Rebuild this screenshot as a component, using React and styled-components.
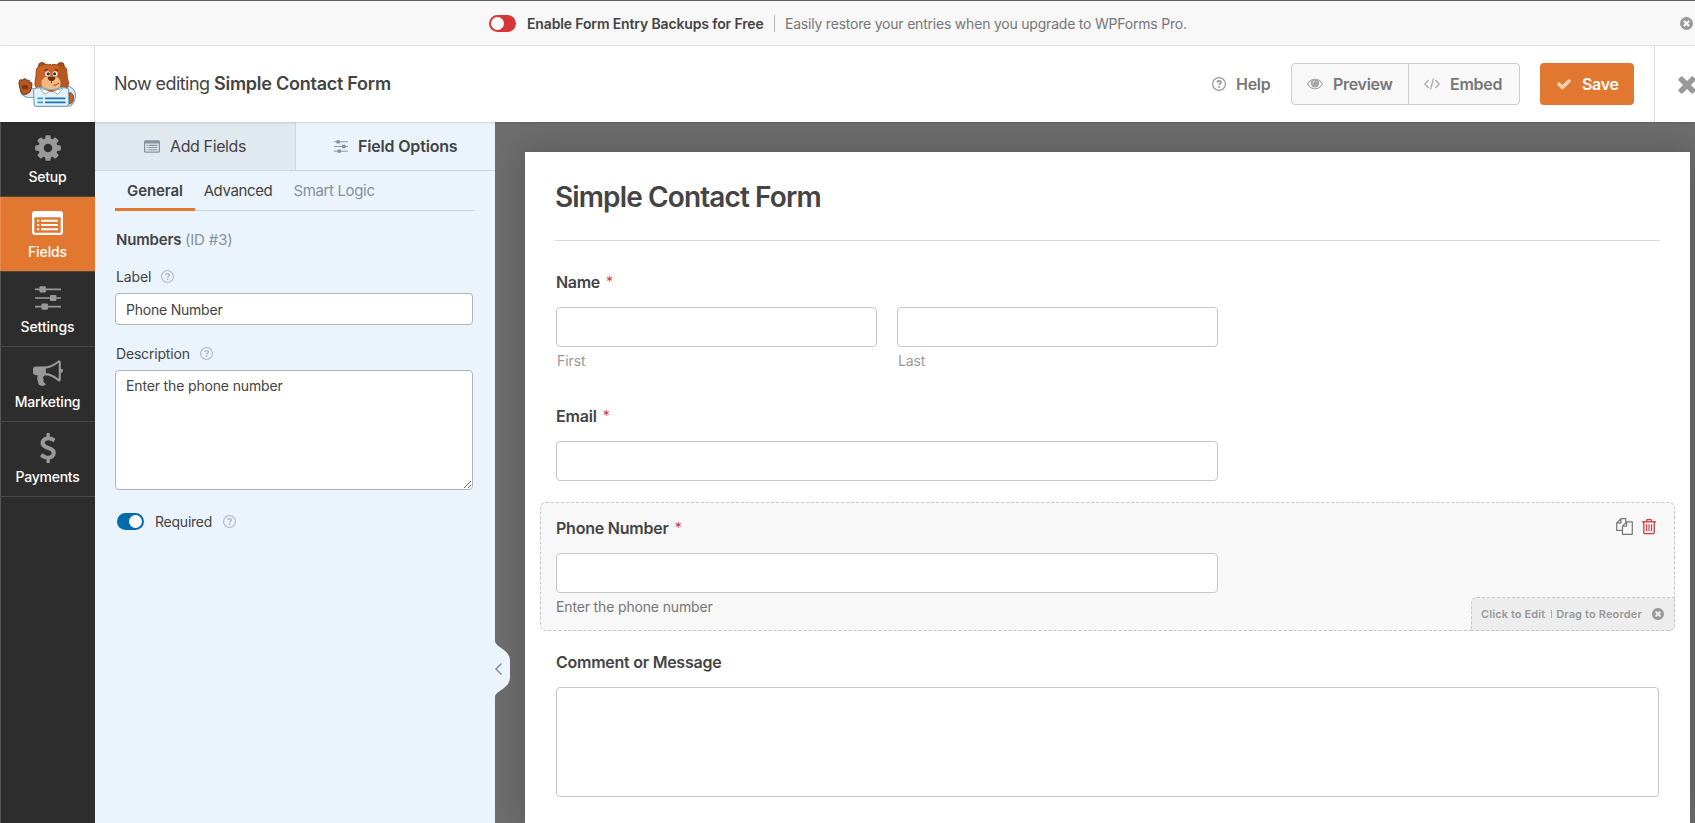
import React from 'react';
import styled, { createGlobalStyle, css } from 'styled-components';

const GlobalStyle = createGlobalStyle`
  *, *::before, *::after { box-sizing: border-box; }
  html, body { margin: 0; padding: 0; height: 100%; overflow: hidden; }
  body {
    font-family: Inter, "Liberation Sans", sans-serif;
    font-size: 14px;
    color: #444;
    -webkit-font-smoothing: antialiased;
  }
`;

const Page = styled.div`
  display: flex;
  flex-direction: column;
  width: 1695px;
  height: 823px;
  overflow: hidden;
  border-top: 1px solid #5f5d64;
  background: #fff;
`;

const Label = styled.span`
  white-space: nowrap;
  letter-spacing: ${(p) => p.$ls || 0}px;
`;

/* ---------- Notice bar ---------- */
const Notice = styled.div`
  flex: none;
  display: flex;
  align-items: center;
  height: 45px;
  padding: 0 1px 0 489px;
  background: #f8f8f8;
  border-bottom: 1px solid #e6e6e6;
  color: #777;
  line-height: 17px;
`;
const NoticeTitle = styled(Label)`
  margin-left: 11px;
  width: 248px;
  border-right: 1px solid #b4b4b4;
  font-weight: 600;
  color: #444;
`;
const NoticeText = styled(Label)`
  margin-left: 10px;
  flex: 1;
`;
const Switch = styled.span`
  flex: none;
  display: flex;
  justify-content: ${(p) => (p.$on ? 'flex-end' : 'flex-start')};
  width: 27px;
  height: 17px;
  padding: 2px;
  border-radius: 9px;
  background: ${(p) => (p.$on ? '#036aab' : '#d63638')};
  &::after {
    content: '';
    width: 13px;
    height: 13px;
    border-radius: 50%;
    background: #fff;
  }
`;

/* ---------- Header ---------- */
const Header = styled.header`
  flex: none;
  position: relative;
  z-index: 2;
  display: flex;
  height: 76px;
  background: #fff;
  box-shadow: 0 1px 2px rgba(0, 0, 0, 0.12);
`;
const Logo = styled.div`
  flex: none;
  width: 95px;
  padding: 15px 0 0 18px;
  border-right: 1px solid #dcdcdc;
`;
const Editing = styled.div`
  flex: 1;
  padding: 27px 0 0 19px;
  font-size: 18px;
  line-height: 22px;
  white-space: nowrap;
  b { font-weight: 600; letter-spacing: -0.25px; }
`;
const Actions = styled.div`
  display: flex;
  align-items: center;
  height: 76px;
  font-size: 16px;
  font-weight: 600;
  color: #777;
`;
const HelpLink = styled.div`
  display: flex;
  align-items: center;
  width: 79px;
  gap: 10px;
`;
const ButtonGroup = styled.div`
  display: flex;
  width: 229px;
  height: 42px;
  margin-right: 20px;
  border: 1px solid #ccc;
  border-radius: 4px;
  background: #f8f8f8;
`;
const GroupButton = styled.div`
  display: flex;
  align-items: center;
  gap: 10px;
  padding-left: 15px;
  width: ${(p) => p.$w}px;
  & + & { border-left: 1px solid #ccc; }
`;
const SaveButton = styled.div`
  display: flex;
  align-items: center;
  gap: 10px;
  width: 94px;
  height: 42px;
  padding-left: 16px;
  border-radius: 4px;
  background: #e27730;
  color: #fff;
`;
const Exit = styled.div`
  flex: none;
  display: flex;
  align-items: center;
  width: 41px;
  height: 76px;
  margin-left: 20px;
  padding-left: 19px;
  border-left: 1px solid #dcdcdc;
  overflow: hidden;
`;

/* ---------- Body ---------- */
const Body = styled.div`
  flex: 1;
  min-height: 0;
  display: flex;
`;
const Sidebar = styled.nav`
  flex: none;
  width: 95px;
  background: #2d2d2d;
  box-shadow: inset 1px 0 #555;
`;
const NavItem = styled.div`
  display: flex;
  flex-direction: column;
  align-items: center;
  height: 75px;
  padding-top: 10px;
  border-bottom: 1px solid #484848;
  color: #fff;
  font-weight: 500;
  line-height: 20px;
  ${(p) => p.$active && css`
    background: #e27730;
    box-shadow: inset 1px 0 #e98a4e;
  `}
`;
const NavIcon = styled.span`
  display: flex;
  align-items: center;
  justify-content: center;
  height: 32px;
  margin-bottom: 3px;
`;

const Panel = styled.aside`
  flex: none;
  position: relative;
  width: 400px;
  background: #ebf3fc;
`;
const Tabs = styled.div`
  display: flex;
  height: 49px;
  border-bottom: 1px solid #ced7e0;
`;
const Tab = styled.div`
  display: flex;
  align-items: center;
  width: ${(p) => p.$w}px;
  padding-left: ${(p) => p.$pl}px;
  gap: 10px;
  font-size: 16px;
  font-weight: ${(p) => (p.$active ? 600 : 400)};
  ${(p) => !p.$active && css`
    background: #e0e8f0;
    border-right: 1px solid #ced7e0;
  `}
`;
const SubTabs = styled.div`
  display: flex;
  height: 40px;
  margin: 0 20px;
  border-bottom: 1px solid #ced7e0;
`;
const SubTab = styled.div`
  height: 40px;
  width: ${(p) => p.$w}px;
  text-align: center;
  font-size: 15px;
  line-height: 40px;
  ${(p) => p.$muted && 'color: #86919d;'}
  ${(p) => p.$active && css`
    font-weight: 600;
    border-bottom: 3px solid #e27730;
  `}
`;
const Options = styled.div`
  padding: 19px 22px 0 20px;
`;
const OptionHeading = styled.div`
  padding-left: 1px;
  font-size: 15px;
  font-weight: 600;
  line-height: 20px;
  small { font-size: 15px; font-weight: 400; color: #86919d; }
`;
const OptionLabel = styled.div`
  display: flex;
  align-items: center;
  height: 20px;
  gap: 10px;
  margin-top: ${(p) => p.$mt}px;
  padding-left: 1px;
`;
const TextField = styled.input`
  display: block;
  width: 358px;
  height: 32px;
  margin-top: 7px;
  padding: 1px 10px 0;
  border: 1px solid #b0b6bd;
  border-radius: 4px;
  background: #fff;
  color: #444;
  font: 14px Inter, sans-serif;
  letter-spacing: ${(p) => p.$ls}px;
`;
const TextArea = styled.textarea`
  display: block;
  width: 358px;
  height: 120px;
  margin-top: 7px;
  padding: 5px 10px;
  border: 1px solid #b0b6bd;
  border-radius: 4px;
  background: #fff;
  color: #444;
  font: 14px/20px Inter, sans-serif;
  letter-spacing: ${(p) => p.$ls}px;
  resize: vertical;
`;
const ToggleRow = styled.div`
  display: flex;
  align-items: center;
  gap: 11px;
  margin-top: 23px;
  padding-left: 2px;
  height: 17px;
`;
const Collapse = styled.div`
  position: absolute;
  left: 399px;
  top: 519px;
  width: 16px;
  height: 56px;
  z-index: 1;
  svg { display: block; }
`;

const Canvas = styled.main`
  flex: 1;
  min-width: 0;
  display: flex;
  padding: 30px 5px 0 30px;
  background: #6d6d6d;
  overflow: hidden;
`;
const Paper = styled.section`
  flex: 1;
  padding: 0 30px;
  background: #fff;
  box-shadow: 0 0 30px rgba(0, 0, 0, 0.2);
`;
const FormTitle = styled.h1`
  margin: 0 0 15px;
  height: 89px;
  padding-top: 28px;
  border-bottom: 1px solid #dcdcdc;
  font-size: 28px;
  font-weight: 600;
  line-height: 34px;
`;
const Field = styled.div`
  position: relative;
  margin: 0 -15px 5px;
  padding: 15px;
  border: 1px dashed transparent;
  border-radius: 6px;
  ${(p) => p.$selected && css`
    background: #f8f8f8;
    border-color: #c6c6c6;
  `}
`;
const FieldLabel = styled.div`
  display: flex;
  height: 20px;
  margin-bottom: 15px;
  gap: 6px;
  font-size: 16px;
  font-weight: 600;
  line-height: 20px;
`;
const Asterisk = styled.span`
  color: #d63638;
  font-size: 14px;
  font-weight: 400;
`;
const FieldRow = styled.div`
  display: flex;
  gap: 20px;
`;
const Control = styled.div`
  width: ${(p) => p.$w};
  height: ${(p) => p.$h || 40}px;
  border: 1px solid #c8c8c8;
  border-radius: 4px;
  background: #fff;
`;
const Hint = styled.div`
  height: 17px;
  margin-top: 5px;
  padding-left: ${(p) => (p.$sub ? 1 : 0)}px;
  line-height: 17px;
  color: ${(p) => (p.$sub ? '#999' : '#777')};
`;
const FieldTools = styled.div`
  position: absolute;
  top: 15px;
  right: 18px;
  display: flex;
  gap: 9px;
`;
const EditHint = styled.div`
  position: absolute;
  right: -1px;
  bottom: -1px;
  display: flex;
  align-items: center;
  width: 204px;
  height: 34px;
  padding: 0 0 1px 9px;
  border: 1px dashed #c6c6c6;
  border-radius: 6px 0 6px 0;
  background: #ededed;
  color: #999;
  font-size: 11px;
  font-weight: 600;
`;
const Divider = styled.span`
  width: 1px;
  height: 8px;
  margin: 0 4px 0 6px;
  background: #aaa;
`;
const HintClose = styled.span`
  display: flex;
  margin-left: auto;
  margin-right: 9px;
`;

/* ---------- Icons ---------- */
const Glyph = ({ d, size, color, box = '0 0 1792 1792' }) => (
  <svg width={size} height={size} viewBox={box} fill={color} style={{ flex: 'none' }}>
    <path d={d} />
  </svg>
);
const COG = 'M1152 896q0-106-75-181t-181-75-181 75-75 181 75 181 181 75 181-75 75-181zm512-109v222q0 12-8 23t-20 13l-185 28q-19 54-39 91 35 50 107 138 10 12 10 25t-9 23q-27 37-99 108t-94 71q-12 0-26-9l-138-108q-44 23-91 38-16 136-29 186-7 28-36 28h-222q-14 0-24.500-8.500t-11.500-21.500l-28-184q-49-16-90-37l-141 107q-10 9-25 9-14 0-25-11-126-114-165-168-7-10-7-23 0-12 8-23 15-21 51-66.500t54-70.500q-27-50-41-99l-183-27q-13-2-21-12.500t-8-23.500v-222q0-12 8-23t19-13l186-28q14-46 39-92-40-57-107-138-10-12-10-24 0-10 9-23 26-36 98.500-107.500t94.500-71.500q13 0 26 10l138 107q44-23 91-38 16-136 29-186 7-28 36-28h222q14 0 24.500 8.500t11.500 21.500l28 184q49 16 90 37l142-107q9-9 24-9 13 0 25 10 129 119 165 170 7 8 7 22 0 12-8 23-15 21-51 66.500t-54 70.500q26 50 41 98l183 28q13 2 21 12.500t8 23.500z';
const CHECK = 'M1671 566q0 40-28 68l-724 724-136 136q-28 28-68 28t-68-28l-136-136-362-362q-28-28-28-68t28-68l136-136q28-28 68-28t68 28l294 295 656-657q28-28 68-28t68 28l136 136q28 28 28 68z';
const TIMES = 'M1490 1322q0 40-28 68l-136 136q-28 28-68 28t-68-28l-294-294-294 294q-28 28-68 28t-68-28l-136-136q-28-28-28-68t28-68l294-294-294-294q-28-28-28-68t28-68l136-136q28-28 68-28t68 28l294 294 294-294q28-28 68-28t68 28l136 136q28 28 28 68t-28 68l-294 294 294 294q28 28 28 68z';
const TIMES_CIRCLE = 'M1277 1122q0-26-19-45l-181-181 181-181q19-19 19-45 0-27-19-46l-90-90q-19-19-46-19-26 0-45 19l-181 181-181-181q-19-19-45-19-27 0-46 19l-90 90q-19 19-19 46 0 26 19 45l181 181-181 181q-19 19-19 45 0 27 19 46l90 90q19 19 46 19 26 0 45-19l181-181 181 181q19 19 45 19 27 0 46-19l90-90q19-19 19-46zm387-226q0 209-103 385.500t-279.500 279.500-385.500 103-385.500-103-279.500-279.500-103-385.500 103-385.500 279.500-279.500 385.500-103 385.500 103 279.500 279.500 103 385.500z';
const BULLHORN = 'M1664 640q53 0 90.500 37.500t37.500 90.500-37.500 90.500-90.500 37.500v384q0 52-38 90t-90 38q-417-347-812-380-58 19-91 66t-31 100.500 40 92.500q-20 33-23 65.500t6 58 33.500 55 48 50 61.500 50.500q-29 58-111.500 83t-168.500 11.500-132-55.500q-7-23-29.500-87.500t-32-94.500-23-89-15-101 3.500-98.500 22-110.500h-122q-66 0-113-47t-47-113v-192q0-66 47-113t113-47h480q435 0 896-384 52 0 90 38t38 90v384zm-128 604v-954q-394 302-768 343v270q377 42 768 341z';
const DOLLAR = 'M1362 1185q0 153-99.500 263.500t-258.500 136.500v175q0 14-9 23t-23 9h-135q-13 0-22.500-9.500t-9.500-22.500v-175q-66-9-127.500-31t-101.500-44.500-74-48-46.500-37.500-17.500-18q-17-21-2-41l103-135q7-10 23-12 15-2 24 9l2 2q113 99 243 125 37 8 74 8 81 0 142.500-43t61.500-122q0-28-15-53t-33.500-42-58.500-37.500-66-32-80-32.500q-39-16-61.500-25t-61.500-26.500-62.500-31-56.500-35.500-53.500-42.500-43.500-49-35.500-58-21-66.500-8.500-78q0-138 98-242t255-134v-180q0-13 9.500-22.500t22.500-9.500h135q14 0 23 9t9 23v176q57 6 110.500 23t87 33.500 63.500 37.500 39 29 15 14q17 18 5 38l-81 146q-8 15-23 16-14 3-27-7-3-3-14.500-12t-39-26.500-58.500-32-74.500-26-85.500-11.500q-95 0-155 43t-60 111q0 26 8.500 48t29.500 41.500 39.500 33 56 31 60.500 27 70 27.500q53 20 81 31.500t76 35 75.500 42.500 62 50 53 63.500 31.500 76.500 13 94z';

const HelpIcon = ({ size = 13, color = '#b0b6bd' }) => (
  <svg width={size} height={size} viewBox="0 0 14 14" fill="none" stroke={color} style={{ flex: 'none' }}>
    <circle cx="7" cy="7" r="6.4" strokeWidth="1.2" />
    <path d="M5 5.500C5.200 4.400 6 3.900 7 3.900s2 .6 2 1.600c0 1.200-1.900 1.300-1.900 2.600" strokeWidth="1.600" />
    <path d="M7.100 9.100v1.600" strokeWidth="1.700" />
  </svg>
);
const EyeIcon = () => (
  <svg width="16" height="12" viewBox="0 0 16 12">
    <path d="M.6 6C2.200 3 5 1.200 8 1.200S13.800 3 15.400 6C13.800 9 11 10.800 8 10.800S2.200 9 .6 6z" fill="none" stroke="#a6a6a6" strokeWidth="1.100" />
    <circle cx="8" cy="5.200" r="4.200" fill="#a6a6a6" />
    <path d="M5.700 5.200C5.700 3.900 6.700 3 8 3" fill="none" stroke="#f8f8f8" strokeWidth=".8" />
  </svg>
);
const CodeIcon = () => (
  <svg width="16" height="12" viewBox="0 0 16 12" fill="none" stroke="#a6a6a6" strokeWidth="1.200">
    <path d="M4.600 2L.8 6l3.800 4M11.400 2l3.800 4-3.800 4M9.400.4L6.600 11.600" />
  </svg>
);
const ListIcon = ({ w, h, color, body }) => (
  <svg width={w} height={h} viewBox="0 0 31 24">
    <rect width="31" height="24" rx="3" fill={color} />
    <rect x="2.300" y="6.300" width="26.400" height="15.400" rx="1" fill={body} />
    <path d="M5 9.800h2.200M5 14h2.200M5 18.200h2.200M9 9.800h17M9 14h17M9 18.200h17" stroke={color} strokeWidth="2" />
  </svg>
);
const SlidersIcon = ({ w, h, color }) => (
  <svg width={w} height={h} viewBox="0 0 26 24">
    <path d="M0 3.300h26M0 12h26M0 20.700h26" stroke={color} strokeWidth="1.700" />
    <g fill={color}>
      <rect x="4.500" y=".2" width="6.400" height="6.200" rx="1" />
      <rect x="15" y="8.900" width="6.400" height="6.200" rx="1" />
      <rect x="6.500" y="17.600" width="6.400" height="6.200" rx="1" />
    </g>
  </svg>
);
const CopyIcon = () => (
  <svg width="17" height="17" viewBox="0 0 17 17" fill="none" stroke="#777" strokeWidth="1.200" strokeLinejoin="round">
    <path d="M6.500 12.300H.7V4.900L4.900.7h4.800V4M4.900.7v4.200H.7" />
    <path d="M10.600 3.900h5.700v12.400H6.500V8.100zM10.600 3.900v4.200H6.500" />
  </svg>
);
const TrashIcon = () => (
  <svg width="14" height="17" viewBox="0 0 14 17" fill="none" stroke="#d63638">
    <path d="M0 3.800h14" strokeWidth="1.300" />
    <path d="M4.300 3.600L5 1.600h4l.7 2M1.800 4v10.500q0 1.200 1.200 1.200h8q1.200 0 1.200-1.200V4" strokeWidth="1.300" />
    <path d="M4.600 6.300v7M7 6.300v7M9.400 6.300v7" strokeWidth="1.100" />
  </svg>
);

const Bear = () => (
  <svg width="59" height="46" viewBox="18 61 59 46">
    <path d="M68 86q7 2 7.500 9t-5.500 11h-4z" fill="#dcebf2" stroke="#7fa9b9" strokeWidth="1.100" />
    <path d="M69.500 92.500q4.500 1 4 6t-5 5.500z" fill="#c4622b" stroke="#7c3413" strokeWidth=".9" />
    <path d="M20.500 91q2 6 8 6.500h6V89l-5-1.500z" fill="#dcebf2" stroke="#7fa9b9" strokeWidth="1.100" />
    <path d="M20 88.500q-1.800-5.500-.6-8 1.500-1.600 3-.2.800-2 2.800-1.500 1.500.4 1.500 1.700 1.500-1 2.700.2l.1 2.300q2-1.200 2.500.3.200 6-2.600 9.200-4.600 3.500-7.900.8z" fill="#b4561f" stroke="#7c3413" strokeWidth="1" />
    <ellipse cx="25" cy="87" rx="3" ry="2.300" fill="#7c3413" />
    <circle cx="42" cy="66" r="3.400" fill="#b4561f" stroke="#7c3413" strokeWidth="1" />
    <circle cx="60.800" cy="66" r="3.400" fill="#b4561f" stroke="#7c3413" strokeWidth="1" />
    <path d="M36.300 70q.4-3.300 4.700-4.600 4-1.300 6-1.100l1 .8 2-1 1.300 1 1.700-.7q5 .3 9.500 1.600 4 1 4.200 4 .2 8 1.800 12.500 1 9.500-17 9.500T35 82.500q1.200-6 1.300-12.500z" fill="#cc642a" stroke="#8a3d16" strokeWidth=".9" />
    <path d="M59 65.600q6.800 1 7.200 4 .4 8 1.900 13.400 0 7-12 8z" fill="#ae511f" opacity=".75" />
    <path d="M41.500 81q2-3.700 5-4.400h9q4 1 5 5.400.6 6.500-4.500 8-6 1.800-11 0-4-3-3.500-9z" fill="#f4b981" />
    <circle cx="47.700" cy="73.700" r="2.500" fill="#fff" />
    <circle cx="55" cy="73.700" r="2.500" fill="#fff" />
    <circle cx="48.200" cy="73.800" r="1.600" fill="#283340" />
    <circle cx="54.600" cy="73.800" r="1.600" fill="#283340" />
    <path d="M44.500 70.500l3-1.200M55 69.300l3 1.200" stroke="#5c250d" strokeWidth="1.200" />
    <path d="M47.500 77.200q4-1.600 8 0 .2 2-2.500 3.800h-3q-2.500-1.700-2.500-3.800z" fill="#6c2f16" />
    <path d="M51.500 81v2.200M53.500 85.400q3.500-.3 5.500-2.600" fill="none" stroke="#6c2f16" strokeWidth=".9" />
    <path d="M33.500 89q9-3 11-.6l7 2 7-2q3-2 10 .6V104q-.3 2.400-2.500 2.400H36.300q-2 0-2.200-2.400z" fill="#e4f1f7" stroke="#7fa9b9" strokeWidth="1.200" />
    <path d="M40 88.300l4.500 6 7-3.800 6.500 3.800 5-6q-12 3.500-23 0z" fill="#fff" stroke="#7fa9b9" strokeWidth=".9" />
    <path d="M42.500 89q9 2.600 18 0l-9 3z" fill="#ae511f" />
    <path d="M37.500 98.300h5.500M37.500 102.300h5.500" stroke="#2b9bd8" strokeWidth="1.700" />
    <path d="M45 98.300h20.500M45 102.300h20.500" stroke="#1b76b6" strokeWidth="1.700" />
  </svg>
);

const NAV = [
  { name: 'Setup', ls: -0.2, icon: <Glyph d={COG} size={30} color="#999" /> },
  { name: 'Fields', ls: -0.1, active: true, icon: <ListIcon w={31} h={24} color="#fff" body="#e27730" /> },
  { name: 'Settings', ls: -0.05, icon: <SlidersIcon w={26} h={24} color="#999" /> },
  { name: 'Marketing', ls: -0.2, icon: <Glyph d={BULLHORN} size={30} color="#999" /> },
  { name: 'Payments', ls: -0.25, icon: <Glyph d={DOLLAR} size={30} color="#999" /> },
];

const Required = () => <Asterisk>*</Asterisk>;

export default function App() {
  return (
    <>
      <GlobalStyle />
      <Page>
        <Notice>
          <Switch />
          <NoticeTitle $ls={-0.14}>Enable Form Entry Backups for Free</NoticeTitle>
          <NoticeText $ls={-0.21}>Easily restore your entries when you upgrade to WPForms Pro.</NoticeText>
          <Glyph d={TIMES_CIRCLE} size={15} color="#999" />
        </Notice>

        <Header>
          <Logo><Bear /></Logo>
          <Editing>
            <Label $ls={-0.56}>Now editing <b>Simple Contact Form</b></Label>
          </Editing>
          <Actions>
            <HelpLink>
              <HelpIcon size={14} color="#999" />
              <Label $ls={-0.3}>Help</Label>
            </HelpLink>
            <ButtonGroup>
              <GroupButton $w={116}><EyeIcon /><Label $ls={-0.3}>Preview</Label></GroupButton>
              <GroupButton $w={111}><CodeIcon /><Label $ls={-0.25}>Embed</Label></GroupButton>
            </ButtonGroup>
            <SaveButton>
              <Glyph d={CHECK} size={16} color="#f6d0b5" />
              <Label $ls={-0.3}>Save</Label>
            </SaveButton>
            <Exit><Glyph d={TIMES} size={26} color="#999" /></Exit>
          </Actions>
        </Header>

        <Body>
          <Sidebar>
            {NAV.map((n) => (
              <NavItem key={n.name} $active={n.active}>
                <NavIcon>{n.icon}</NavIcon>
                <Label $ls={n.ls}>{n.name}</Label>
              </NavItem>
            ))}
          </Sidebar>

          <Panel>
            <Tabs>
              <Tab $w={201} $pl={49}>
                <ListIcon w={16} h={13} color="#86919d" body="#e0e8f0" />
                <Label $ls={-0.38}>Add Fields</Label>
              </Tab>
              <Tab $w={199} $pl={38} $active>
                <SlidersIcon w={14} h={13} color="#86919d" />
                <Label $ls={-0.17}>Field Options</Label>
              </Tab>
            </Tabs>
            <SubTabs>
              <SubTab $w={80} $active><Label $ls={-0.1}>General</Label></SubTab>
              <SubTab $w={86}><Label $ls={-0.38}>Advanced</Label></SubTab>
              <SubTab $w={106} $muted><Label $ls={-0.35}>Smart Logic</Label></SubTab>
            </SubTabs>
            <Options>
              <OptionHeading><Label $ls={-0.17}>Numbers <small>(ID #3)</small></Label></OptionHeading>
              <OptionLabel $mt={16}><Label $ls={-0.1}>Label</Label><HelpIcon /></OptionLabel>
              <TextField $ls={-0.22} defaultValue="Phone Number" />
              <OptionLabel $mt={18}><Label $ls={-0.18}>Description</Label><HelpIcon /></OptionLabel>
              <TextArea $ls={-0.15} defaultValue="Enter the phone number" />
              <ToggleRow>
                <Switch $on />
                <Label $ls={-0.23}>Required</Label>
                <HelpIcon />
              </ToggleRow>
            </Options>
            <Collapse>
              <svg width="16" height="56" viewBox="0 0 16 56">
                <path d="M0 0h1c1 7 15 8 15 20v16c0 12-14 13-15 20H0z" fill="#ebf3fc" />
                <path d="M7.500 22.500L2 28l5.500 5.500" fill="none" stroke="#86919d" strokeWidth="1.500" />
              </svg>
            </Collapse>
          </Panel>

          <Canvas>
            <Paper>
              <FormTitle><Label $ls={-0.88}>Simple Contact Form</Label></FormTitle>
              <Field>
                <FieldLabel><Label $ls={-0.3}>Name</Label><Required /></FieldLabel>
                <FieldRow>
                  <div><Control $w="321px" /><Hint $sub><Label $ls={-0.05}>First</Label></Hint></div>
                  <div><Control $w="321px" /><Hint $sub><Label $ls={-0.1}>Last</Label></Hint></div>
                </FieldRow>
              </Field>
              <Field>
                <FieldLabel><Label $ls={-0.2}>Email</Label><Required /></FieldLabel>
                <Control $w="662px" />
              </Field>
              <Field $selected>
                <FieldLabel><Label $ls={-0.22}>Phone Number</Label><Required /></FieldLabel>
                <Control $w="662px" />
                <Hint><Label $ls={-0.15}>Enter the phone number</Label></Hint>
                <FieldTools><CopyIcon /><TrashIcon /></FieldTools>
                <EditHint>
                  <Label $ls={0.1}>Click to Edit</Label>
                  <Divider />
                  <Label $ls={0.15}>Drag to Reorder</Label>
                  <HintClose><Glyph d={TIMES_CIRCLE} size={14} color="#999" /></HintClose>
                </EditHint>
              </Field>
              <Field>
                <FieldLabel><Label $ls={-0.25}>Comment or Message</Label></FieldLabel>
                <Control $w="100%" $h={110} />
              </Field>
            </Paper>
          </Canvas>
        </Body>
      </Page>
    </>
  );
}
